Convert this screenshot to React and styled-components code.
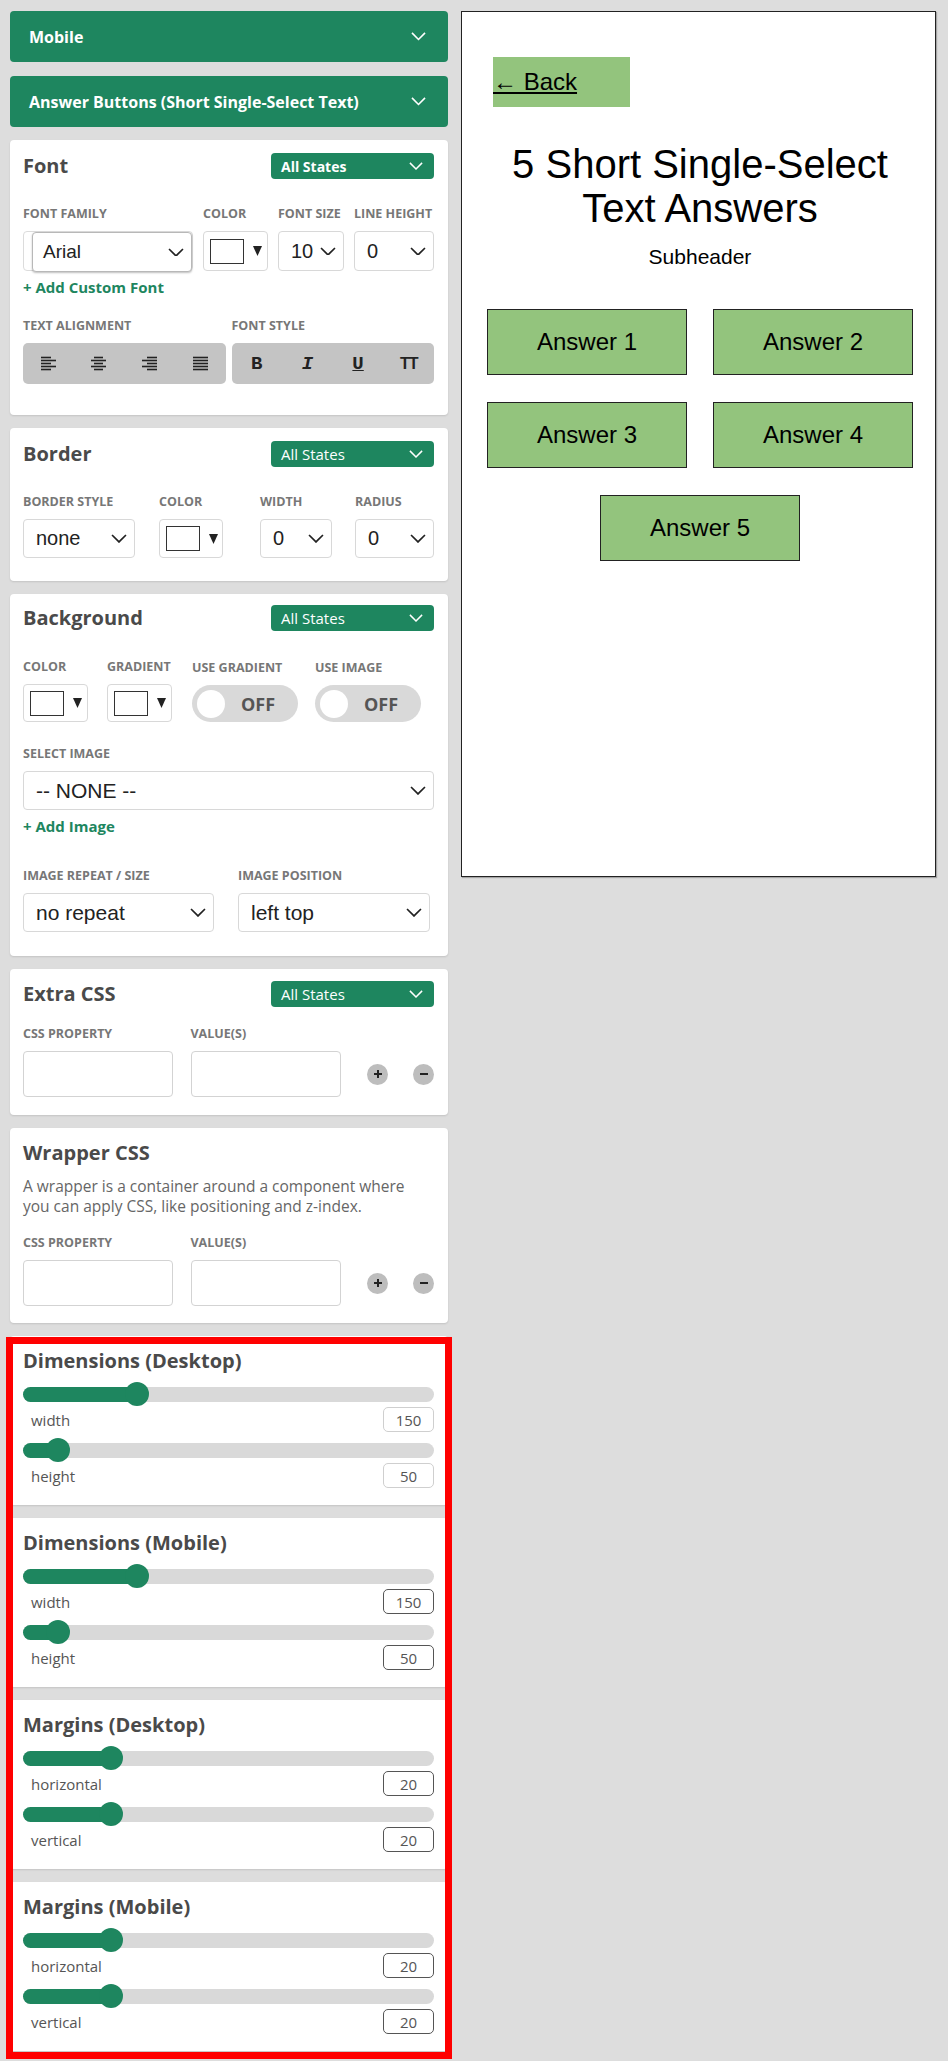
import React from "react";
import styled, { createGlobalStyle } from "styled-components";

const GREEN = "#1e865f";

const GlobalStyle = createGlobalStyle`
  body {
    margin: 0;
    background: #dddddd;
    font-family: "Open Sans", "Noto Sans", sans-serif;
  }
`;

const Chevron = ({ color = "#222", w = 16 }) => (
  <svg width={w} height={w * 0.56} viewBox="0 0 16 9">
    <polyline points="1,1 8,8 15,1" fill="none" stroke={color} strokeWidth="1.7" />
  </svg>
);

const Triangle = () => (
  <svg width="9" height="10" viewBox="0 0 9 10">
    <polygon points="0,0 9,0 4.5,10" fill="#222" />
  </svg>
);

const AlignIcon = ({ type }) => {
  const rows = [1.5, 4.5, 7.5, 10.5, 13.5];
  const full = [0, 15];
  const short = {
    left: [0, 10],
    center: [3, 12],
    right: [5, 15],
    justify: [0, 15],
  }[type];
  return (
    <svg width="15" height="15" viewBox="0 0 15 15">
      {rows.map((y, i) => {
        const [a, b] = i % 2 === 0 ? (type === "justify" ? full : short) : full;
        return <line key={i} x1={a} x2={b} y1={y} y2={y} stroke="#222" strokeWidth="1.6" />;
      })}
    </svg>
  );
};

const Page = styled.div`
  display: flex;
  align-items: flex-start;
  gap: 13px;
  padding: 11px 0 11px 10px;
`;

const Sidebar = styled.div`
  width: 438px;
  display: flex;
  flex-direction: column;
  gap: 13px;
`;

const AccordionGroup = styled.div`
  display: flex;
  flex-direction: column;
  gap: 14px;
`;

const AccordionBar = styled.div`
  height: 51px;
  box-sizing: border-box;
  background: ${GREEN};
  border-radius: 4px;
  color: #fff;
  font-size: 16px;
  font-weight: 700;
  padding: 0 22px 0 19px;
  display: flex;
  align-items: center;
  justify-content: space-between;
`;

const Card = styled.div`
  background: #fff;
  border-radius: 4px;
  box-shadow: 0 1px 2px rgba(0, 0, 0, 0.12);
  padding: ${(p) => p.$pt || 13}px 14px ${(p) => p.$pb || 20}px 13px;
`;

const CardHeader = styled.div`
  display: flex;
  align-items: center;
  justify-content: space-between;
  height: 26px;
`;

const CardTitle = styled.div`
  font-size: 20px;
  line-height: ${(p) => (p.$compact ? 24 : 26)}px;
  font-weight: 700;
  color: #4a4a4a;
`;

const StatePill = styled.div`
  width: 163px;
  height: 26px;
  box-sizing: border-box;
  background: ${GREEN};
  border-radius: 4px;
  color: #fff;
  font-size: ${(p) => (p.$bold ? 14 : 15)}px;
  font-weight: ${(p) => (p.$bold ? 700 : 400)};
  padding: 0 11px 0 10px;
  display: flex;
  align-items: center;
  justify-content: space-between;
`;

const Grid = styled.div`
  display: grid;
  grid-template-columns: ${(p) => p.$cols};
  column-gap: ${(p) => p.$gap || 0}px;
  margin-top: ${(p) => p.$mt || 0}px;
  align-items: end;
`;

const Label = styled.div`
  font-size: 12.5px;
  line-height: 14px;
  font-weight: 700;
  color: #777;
  text-transform: uppercase;
  white-space: nowrap;
  margin-bottom: 10px;
`;

const SelectBox = styled.div`
  display: flex;
  align-items: center;
  justify-content: space-between;
  height: ${(p) => p.$h || 40}px;
  width: ${(p) => (p.$w ? `${p.$w}px` : "100%")};
  box-sizing: border-box;
  border: 1px solid ${(p) => (p.$dark ? "#b8b8b8" : "#d8d8d8")};
  box-shadow: ${(p) => (p.$dark ? "0 1px 2px rgba(0,0,0,0.25)" : "none")};
  border-radius: 4px;
  background: #fff;
  padding: 0 7px 0 ${(p) => p.$pl || 12}px;
  font-family: "Liberation Sans", Arial, sans-serif;
  font-size: ${(p) => p.$fs || 20}px;
  color: #222;
`;

const FontFamilyFrame = styled.div`
  height: 40px;
  box-sizing: border-box;
  border: 1px solid #dcdcdc;
  border-radius: 4px;
  padding: 0 0 0 8px;
  display: flex;
`;

const ColorBox = styled.div`
  width: ${(p) => p.$w || 65}px;
  height: ${(p) => p.$h || 40}px;
  box-sizing: border-box;
  border: 1px solid #d8d8d8;
  border-radius: 4px;
  display: flex;
  align-items: center;
  gap: 9px;
  padding-left: 6px;
`;

const Swatch = styled.div`
  width: 34px;
  height: 25px;
  box-sizing: border-box;
  border: 1.5px solid #333;
  background: #fff;
`;

const AddLink = styled.div`
  margin-top: ${(p) => p.$mt}px;
  font-size: 15px;
  line-height: 17px;
  font-weight: 700;
  color: ${GREEN};
`;

const ButtonGroup = styled.div`
  height: 41px;
  background: #c4c4c4;
  border-radius: 5px;
  display: grid;
  grid-template-columns: repeat(4, 1fr);
  align-items: center;
  justify-items: center;
  color: #222;
`;

const StyleGlyph = styled.span`
  font-family: ${(p) => (p.$sans ? '"Liberation Sans", sans-serif' : '"Liberation Mono", monospace')};
  font-size: ${(p) => (p.$sans ? 16 : 19)}px;
  font-weight: 700;
  font-style: ${(p) => (p.$italic ? "italic" : "normal")};
  text-decoration: ${(p) => (p.$under ? "underline" : "none")};
  letter-spacing: ${(p) => (p.$sans ? "-1px" : "0")};
`;

const Toggle = styled.div`
  width: 106px;
  height: 37px;
  box-sizing: border-box;
  border-radius: 19px;
  background: #d9d9d9;
  display: flex;
  align-items: center;
  padding-left: 5px;
  gap: 16px;
  font-size: 18px;
  font-weight: 700;
  color: #555;
`;

const Knob = styled.span`
  width: 28px;
  height: 28px;
  border-radius: 50%;
  background: #fff;
`;

const CssRow = styled.div`
  display: flex;
  align-items: flex-end;
  margin-top: ${(p) => p.$mt}px;
`;

const CssColumn = styled.div`
  width: ${(p) => p.$w}px;
  margin-right: ${(p) => p.$mr || 0}px;
`;

const TextInput = styled.div`
  height: 46px;
  box-sizing: border-box;
  border: 1px solid #d3d3d3;
  border-radius: 4px;
`;

const RoundButtons = styled.div`
  height: 46px;
  display: flex;
  align-items: center;
  gap: 25px;
  margin-left: 26px;
`;

const RoundButton = styled.div`
  width: 21px;
  height: 21px;
  border-radius: 50%;
  background: #bdbdbd;
  display: flex;
  align-items: center;
  justify-content: center;
`;

const Description = styled.p`
  margin: 10px 0 0;
  font-size: 15.5px;
  line-height: 20px;
  color: #666;
`;

const Highlight = styled.div`
  position: relative;
  display: flex;
  flex-direction: column;
  gap: 13px;

  &::after {
    content: "";
    position: absolute;
    top: 1px;
    left: -4px;
    right: -4px;
    bottom: -8px;
    border: 7px solid #ff0000;
    pointer-events: none;
  }
`;

const SliderTrack = styled.div`
  position: relative;
  height: 24px;
  margin-top: ${(p) => p.$mt}px;
  display: flex;
  align-items: center;

  &::before {
    content: "";
    flex: 1;
    height: 15px;
    border-radius: 8px;
    background: #d9d9d9;
  }
`;

const SliderFill = styled.div`
  position: absolute;
  left: 0;
  top: 4.5px;
  height: 15px;
  width: ${(p) => p.$pct}%;
  border-radius: 8px 0 0 8px;
  background: ${GREEN};
`;

const SliderKnob = styled.div`
  position: absolute;
  top: 0;
  left: ${(p) => p.$pct}%;
  width: 24px;
  height: 24px;
  margin-left: -12px;
  border-radius: 50%;
  background: ${GREEN};
`;

const ValueRow = styled.div`
  display: flex;
  align-items: center;
  justify-content: space-between;
  margin-top: 1px;
  padding-left: 8px;
  font-size: 15px;
  color: #555;
`;

const ValueBox = styled.div`
  width: 51px;
  height: 25px;
  box-sizing: border-box;
  border: 1.5px solid ${(p) => (p.$light ? "#cfcfcf" : "#555")};
  border-radius: 5px;
  display: flex;
  align-items: center;
  justify-content: center;
  font-size: 15px;
  color: #555;
`;

const Preview = styled.div`
  width: 475px;
  height: 866px;
  box-sizing: border-box;
  background: #fff;
  border: 1.5px solid #222;
  box-shadow: 1px 1px 1px rgba(0, 0, 0, 0.25);
  padding: 45px 0 0 3px;
  font-family: "Liberation Sans", Arial, sans-serif;
  color: #000;
`;

const BackButton = styled.div`
  width: 137px;
  height: 50px;
  margin-left: 28px;
  background: #93c47d;
  display: flex;
  align-items: center;
  font-size: 24px;
  text-decoration: underline;
`;

const Headline = styled.h1`
  margin: 35px 0 0;
  font-size: 40px;
  line-height: 44px;
  font-weight: 400;
  text-align: center;
`;

const Subheader = styled.div`
  margin-top: 15px;
  font-size: 21px;
  text-align: center;
`;

const AnswerGrid = styled.div`
  width: 426px;
  margin: 40px auto 0;
  display: flex;
  flex-wrap: wrap;
  justify-content: center;
  gap: 27px 26px;
`;

const AnswerButton = styled.div`
  width: 200px;
  height: 66px;
  box-sizing: border-box;
  background: #93c47d;
  border: 1px solid #222;
  display: flex;
  align-items: center;
  justify-content: center;
  font-size: 24px;
`;

const Field = ({ label, children }) => (
  <div>
    <Label>{label}</Label>
    {children}
  </div>
);

const Select = ({ value, ...rest }) => (
  <SelectBox {...rest}>
    <span>{value}</span>
    <Chevron />
  </SelectBox>
);

const ColorPicker = ({ w, h }) => (
  <ColorBox $w={w} $h={h}>
    <Swatch />
    <Triangle />
  </ColorBox>
);

const Header = ({ title, bold }) => (
  <CardHeader>
    <CardTitle>{title}</CardTitle>
    <StatePill $bold={bold}>
      All States
      <Chevron color="#fff" w={14} />
    </StatePill>
  </CardHeader>
);

const CssFields = ({ mt }) => (
  <CssRow $mt={mt}>
    <CssColumn $w={151} $mr={18}>
      <Label>Css property</Label>
      <TextInput />
    </CssColumn>
    <CssColumn $w={152}>
      <Label>Value(s)</Label>
      <TextInput />
    </CssColumn>
    <RoundButtons>
      <RoundButton>
        <svg width="10" height="10" viewBox="0 0 10 10">
          <path d="M5 1v8M1 5h8" stroke="#222" strokeWidth="2" />
        </svg>
      </RoundButton>
      <RoundButton>
        <svg width="10" height="10" viewBox="0 0 10 10">
          <path d="M1 5h8" stroke="#222" strokeWidth="2" />
        </svg>
      </RoundButton>
    </RoundButtons>
  </CssRow>
);

const Slider = ({ pct, mt }) => (
  <SliderTrack $mt={mt}>
    <SliderFill $pct={pct} />
    <SliderKnob $pct={pct} />
  </SliderTrack>
);

const SliderCard = ({ title, rows, light }) => (
  <Card $pb={17}>
    <CardTitle $compact>{title}</CardTitle>
    {rows.map((r, i) => (
      <div key={r.label}>
        <Slider pct={r.pct} mt={i === 0 ? 9 : 6} />
        <ValueRow>
          {r.label}
          <ValueBox $light={light}>{r.value}</ValueBox>
        </ValueRow>
      </div>
    ))}
  </Card>
);

const sliderCards = [
  {
    title: "Dimensions (Desktop)",
    light: true,
    rows: [
      { label: "width", value: 150, pct: 27.8 },
      { label: "height", value: 50, pct: 8.6 },
    ],
  },
  {
    title: "Dimensions (Mobile)",
    rows: [
      { label: "width", value: 150, pct: 27.8 },
      { label: "height", value: 50, pct: 8.6 },
    ],
  },
  {
    title: "Margins (Desktop)",
    rows: [
      { label: "horizontal", value: 20, pct: 21.5 },
      { label: "vertical", value: 20, pct: 21.5 },
    ],
  },
  {
    title: "Margins (Mobile)",
    rows: [
      { label: "horizontal", value: 20, pct: 21.5 },
      { label: "vertical", value: 20, pct: 21.5 },
    ],
  },
];

export default function App() {
  return (
    <>
      <GlobalStyle />
      <Page>
        <Sidebar>
          <AccordionGroup>
            <AccordionBar>
              Mobile
              <Chevron color="#fff" w={15} />
            </AccordionBar>
            <AccordionBar>
              Answer Buttons (Short Single-Select Text)
              <Chevron color="#fff" w={15} />
            </AccordionBar>
          </AccordionGroup>

          <Card $pb={31}>
            <Header title="Font" bold />
            <Grid $cols="170px 65px 66px 80px" $gap={10} $mt={28}>
              <Field label="Font family">
                <FontFamilyFrame>
                  <Select value="Arial" $dark $pl={10} $fs={19} />
                </FontFamilyFrame>
              </Field>
              <Field label="Color">
                <ColorPicker />
              </Field>
              <Field label="Font size">
                <Select value="10" $pl={12} />
              </Field>
              <Field label="Line height">
                <Select value="0" $pl={12} />
              </Field>
            </Grid>
            <AddLink $mt={8}>+ Add Custom Font</AddLink>
            <Grid $cols="1fr 1fr" $gap={6} $mt={23}>
              <Field label="Text alignment">
                <ButtonGroup>
                  <AlignIcon type="left" />
                  <AlignIcon type="center" />
                  <AlignIcon type="right" />
                  <AlignIcon type="justify" />
                </ButtonGroup>
              </Field>
              <Field label="Font style">
                <ButtonGroup>
                  <StyleGlyph>B</StyleGlyph>
                  <StyleGlyph $italic>I</StyleGlyph>
                  <StyleGlyph $under>U</StyleGlyph>
                  <StyleGlyph $sans>TT</StyleGlyph>
                </ButtonGroup>
              </Field>
            </Grid>
          </Card>

          <Card $pb={23}>
            <Header title="Border" />
            <Grid $cols="136px 101px 95px 1fr" $mt={28}>
              <Field label="Border style">
                <Select value="none" $w={112} $h={39} />
              </Field>
              <Field label="Color">
                <ColorPicker w={64} h={39} />
              </Field>
              <Field label="Width">
                <Select value="0" $w={72} $h={39} />
              </Field>
              <Field label="Radius">
                <Select value="0" $h={39} />
              </Field>
            </Grid>
          </Card>

          <Card $pt={11} $pb={24}>
            <Header title="Background" />
            <Grid $cols="84px 85px 123px 1fr" $mt={29}>
              <Field label="Color">
                <ColorPicker h={38} />
              </Field>
              <Field label="Gradient">
                <ColorPicker h={38} />
              </Field>
              <Field label="Use gradient">
                <Toggle>
                  <Knob />
                  OFF
                </Toggle>
              </Field>
              <Field label="Use image">
                <Toggle>
                  <Knob />
                  OFF
                </Toggle>
              </Field>
            </Grid>
            <Grid $cols="1fr" $mt={25}>
              <Field label="Select image">
                <Select value="-- NONE --" $h={39} $fs={21} />
              </Field>
            </Grid>
            <AddLink $mt={8}>+ Add Image</AddLink>
            <Grid $cols="191px 192px" $gap={24} $mt={34}>
              <Field label="Image repeat / size">
                <Select value="no repeat" $h={39} $fs={21} />
              </Field>
              <Field label="Image position">
                <Select value="left top" $h={39} $fs={21} />
              </Field>
            </Grid>
          </Card>

          <Card $pt={12} $pb={18}>
            <Header title="Extra CSS" />
            <CssFields mt={20} />
          </Card>

          <Card $pt={12} $pb={17}>
            <CardTitle>Wrapper CSS</CardTitle>
            <Description>
              A wrapper is a container around a component where
              <br />
              you can apply CSS, like positioning and z-index.
            </Description>
            <CssFields mt={20} />
          </Card>

          <Highlight>
            {sliderCards.map((c) => (
              <SliderCard key={c.title} {...c} />
            ))}
          </Highlight>
        </Sidebar>

        <Preview>
          <BackButton>← Back</BackButton>
          <Headline>
            5 Short Single-Select
            <br />
            Text Answers
          </Headline>
          <Subheader>Subheader</Subheader>
          <AnswerGrid>
            {[1, 2, 3, 4, 5].map((n) => (
              <AnswerButton key={n}>Answer {n}</AnswerButton>
            ))}
          </AnswerGrid>
        </Preview>
      </Page>
    </>
  );
}
